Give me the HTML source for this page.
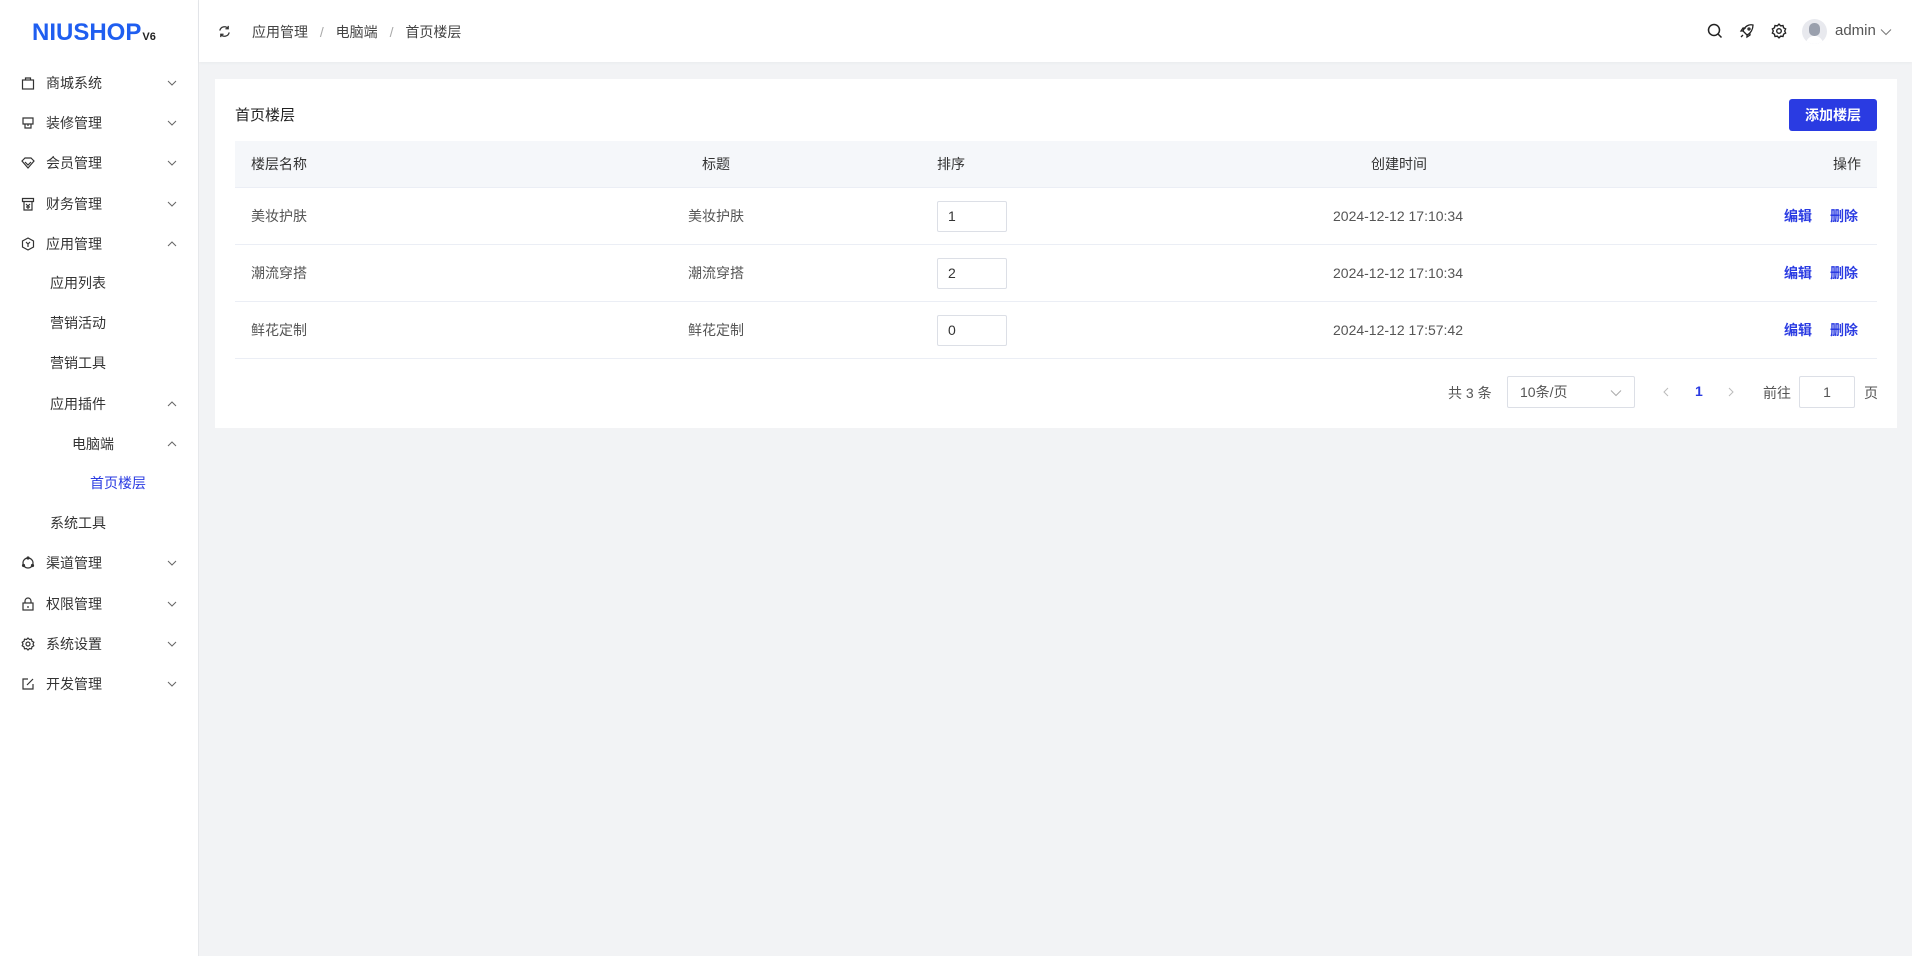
<!DOCTYPE html><html><head><meta charset="utf-8"><style>
*{box-sizing:border-box;margin:0;padding:0}
body{width:1912px;height:956px;background:#f2f3f5;font-family:"Liberation Sans","Noto Sans CJK SC",sans-serif;font-size:14px;color:#333;position:relative;overflow:hidden}
.side{position:absolute;left:0;top:0;width:199px;height:956px;background:#fff;border-right:1px solid #e6e8eb}
.logo{position:absolute;left:32px;top:19px;font-weight:bold;font-size:24px;color:#1f5ef0;font-family:"Liberation Sans",sans-serif;white-space:nowrap}
.logo small{font-size:11px;color:#222;margin-left:1px}
.mi{position:absolute;left:0;width:199px;height:40px;line-height:40px;font-size:14px;color:#333}
.mi svg.ic{position:absolute;left:21px;top:13px}
.mi .t{position:absolute}
.mi .ch{position:absolute;left:167px;top:16px}
.hdr{position:absolute;left:199px;top:0;right:0;height:62px;background:#fff;box-shadow:0 1px 3px rgba(0,0,0,.04)}
.card{position:absolute;left:215px;top:79px;width:1682px;height:349px;background:#fff}
.abs{position:absolute}
.btn{position:absolute;left:1789px;top:99px;width:88px;height:32px;background:#2a3be2;color:#fff;border-radius:3px;font-weight:bold;font-size:14px;text-align:center;line-height:32px}
.th{position:absolute;left:235px;top:141px;width:1642px;height:47px;background:#f5f7fa;border-bottom:1px solid #ebeef5}
.row{position:absolute;left:235px;width:1642px;height:57px;border-bottom:1px solid #ebeef5}
.c{position:absolute;top:0;line-height:57px;font-size:14px;color:#555;white-space:nowrap}
.inp{position:absolute;left:702px;top:13px;width:70px;height:31px;border:1px solid #dcdfe6;border-radius:2px;line-height:29px;padding-left:10px;color:#333}
.lk{color:#2a3be2;font-weight:bold}
</style></head><body>
<div class="side">
<div class="logo">NIUSHOP<small>V6</small></div>
<div class="mi" style="top:63px"><svg class="ic" width="14" height="14" viewBox="0 0 14 14" fill="none" stroke="#333" stroke-width="1.2"><rect x="1.5" y="4" width="11" height="9"/><path d="M4.5 4V2h5v2"/></svg><span class="t" style="left:46px">商城系统</span><svg class="ch" width="10" height="8" viewBox="0 0 10 8"><path d="M1 2l4 4 4-4" stroke="#666" fill="none"/></svg></div>
<div class="mi" style="top:103px"><svg class="ic" width="14" height="14" viewBox="0 0 14 14" fill="none" stroke="#333" stroke-width="1.2"><path d="M2 2h10v6H2zM4 8v4h6V8M7 8v2"/></svg><span class="t" style="left:46px">装修管理</span><svg class="ch" width="10" height="8" viewBox="0 0 10 8"><path d="M1 2l4 4 4-4" stroke="#666" fill="none"/></svg></div>
<div class="mi" style="top:143px"><svg class="ic" width="14" height="14" viewBox="0 0 14 14" fill="none" stroke="#333" stroke-width="1.2"><path d="M1 5l3-3h6l3 3-6 7z M4 6l3 3 3-3"/></svg><span class="t" style="left:46px">会员管理</span><svg class="ch" width="10" height="8" viewBox="0 0 10 8"><path d="M1 2l4 4 4-4" stroke="#666" fill="none"/></svg></div>
<div class="mi" style="top:184px"><svg class="ic" width="14" height="14" viewBox="0 0 14 14" fill="none" stroke="#333" stroke-width="1.2"><path d="M1.5 1.5h11v3h-11zM3 4.5V13h8V4.5M5 7l2 2 2-2M7 9v3M5 10h4"/></svg><span class="t" style="left:46px">财务管理</span><svg class="ch" width="10" height="8" viewBox="0 0 10 8"><path d="M1 2l4 4 4-4" stroke="#666" fill="none"/></svg></div>
<div class="mi" style="top:224px"><svg class="ic" width="14" height="14" viewBox="0 0 14 14" fill="none" stroke="#333" stroke-width="1.2"><path d="M7 1l5.5 3v6L7 13 1.5 10V4zM5 5l2 2 2-2M7 7v3"/></svg><span class="t" style="left:46px">应用管理</span><svg class="ch" width="10" height="8" viewBox="0 0 10 8"><path d="M1 6l4-4 4 4" stroke="#666" fill="none"/></svg></div>
<div class="mi" style="top:263px"><span class="t" style="left:50px">应用列表</span></div>
<div class="mi" style="top:303px"><span class="t" style="left:50px">营销活动</span></div>
<div class="mi" style="top:343px"><span class="t" style="left:50px">营销工具</span></div>
<div class="mi" style="top:384px"><span class="t" style="left:50px">应用插件</span><svg class="ch" width="10" height="8" viewBox="0 0 10 8"><path d="M1 6l4-4 4 4" stroke="#666" fill="none"/></svg></div>
<div class="mi" style="top:424px"><span class="t" style="left:72px">电脑端</span><svg class="ch" width="10" height="8" viewBox="0 0 10 8"><path d="M1 6l4-4 4 4" stroke="#666" fill="none"/></svg></div>
<div class="mi" style="top:463px"><span class="t" style="left:90px;color:#2a3be2">首页楼层</span></div>
<div class="mi" style="top:503px"><span class="t" style="left:50px">系统工具</span></div>
<div class="mi" style="top:543px"><svg class="ic" width="14" height="14" viewBox="0 0 14 14" fill="none" stroke="#333" stroke-width="1.2"><circle cx="7" cy="7" r="5"/><circle cx="7" cy="2" r="1" fill="#333"/><circle cx="2.5" cy="9.5" r="1" fill="#333"/><circle cx="11.5" cy="9.5" r="1" fill="#333"/></svg><span class="t" style="left:46px">渠道管理</span><svg class="ch" width="10" height="8" viewBox="0 0 10 8"><path d="M1 2l4 4 4-4" stroke="#666" fill="none"/></svg></div>
<div class="mi" style="top:584px"><svg class="ic" width="14" height="14" viewBox="0 0 14 14" fill="none" stroke="#333" stroke-width="1.2"><rect x="2" y="6" width="10" height="7"/><path d="M4 6V4a3 3 0 016 0v2M7 9v2"/></svg><span class="t" style="left:46px">权限管理</span><svg class="ch" width="10" height="8" viewBox="0 0 10 8"><path d="M1 2l4 4 4-4" stroke="#666" fill="none"/></svg></div>
<div class="mi" style="top:624px"><svg class="ic" width="14" height="14" viewBox="0 0 14 14" fill="none" stroke="#333" stroke-width="1.2"><circle cx="7" cy="7" r="2"/><path d="M7 1l1.5 1.5 2-.3.5 2 1.8 1L12 7l.8 1.8-1.8 1-.5 2-2-.3L7 13l-1.5-1.5-2 .3-.5-2-1.8-1L2 7l-.8-1.8 1.8-1 .5-2 2 .3z"/></svg><span class="t" style="left:46px">系统设置</span><svg class="ch" width="10" height="8" viewBox="0 0 10 8"><path d="M1 2l4 4 4-4" stroke="#666" fill="none"/></svg></div>
<div class="mi" style="top:664px"><svg class="ic" width="14" height="14" viewBox="0 0 14 14" fill="none" stroke="#333" stroke-width="1.2"><path d="M7 2H2v10h10V7M6 8l6-6"/></svg><span class="t" style="left:46px">开发管理</span><svg class="ch" width="10" height="8" viewBox="0 0 10 8"><path d="M1 2l4 4 4-4" stroke="#666" fill="none"/></svg></div>
</div>
<div class="hdr">
<svg class="abs" style="left:19px;top:25px" width="13" height="13" viewBox="0 0 14 14" fill="none" stroke="#333" stroke-width="1.4"><path d="M2 6a5 5 0 019-2M12 8a5 5 0 01-9 2M11 1v3H8M3 13v-3h3"/></svg>
<div class="abs" style="left:53px;top:22px;font-size:14px;color:#444">应用管理 <span style="color:#aaa;margin:0 8px">/</span> 电脑端 <span style="color:#aaa;margin:0 8px">/</span> 首页楼层</div>
<svg class="abs" style="left:1508px;top:23px" width="16" height="16" viewBox="0 0 16 16" fill="none" stroke="#222" stroke-width="1.5"><circle cx="7" cy="7" r="5.5"/><path d="M11 11l3.5 3.5"/></svg>
<svg class="abs" style="left:1540px;top:23px" width="16" height="16" viewBox="0 0 16 16" fill="none" stroke="#222" stroke-width="1.3"><path d="M6 10l-2-2c2-5 6-7 10-6 0 4-2 8-6 10zM4 8H2l2-3h3M8 12v2l3-2V9M4 12l-2 2"/><circle cx="10" cy="6" r="1"/></svg>
<svg class="abs" style="left:1572px;top:23px" width="16" height="16" viewBox="0 0 14 14" fill="none" stroke="#222" stroke-width="1.2"><circle cx="7" cy="7" r="2"/><path d="M7 1l1.5 1.5 2-.3.5 2 1.8 1L12 7l.8 1.8-1.8 1-.5 2-2-.3L7 13l-1.5-1.5-2 .3-.5-2-1.8-1L2 7l-.8-1.8 1.8-1 .5-2 2 .3z"/></svg>
<div class="abs" style="left:1603px;top:19px;width:25px;height:25px;border-radius:50%;background:#e8e9ee;overflow:hidden"><div style="position:absolute;left:7px;top:4px;width:11px;height:13px;border-radius:5px;background:#9aa0ad"></div><div style="position:absolute;left:4px;top:17px;width:17px;height:10px;border-radius:8px 8px 0 0;background:#fff"></div></div>
<div class="abs" style="left:1636px;top:22px;font-size:15px;color:#555">admin</div>
<svg class="abs" style="left:1681px;top:28px" width="12" height="8" viewBox="0 0 12 8"><path d="M1 1.5l5 5 5-5" stroke="#777" fill="none"/></svg>
</div>
<div class="card"></div>
<div class="abs" style="left:235px;top:104px;font-size:15px;color:#222">首页楼层</div>
<div class="btn">添加楼层</div>
<div class="th">
<div class="c" style="left:16px;line-height:47px;color:#333">楼层名称</div>
<div class="c" style="left:467px;line-height:47px;color:#333">标题</div>
<div class="c" style="left:702px;line-height:47px;color:#333">排序</div>
<div class="c" style="left:1136px;line-height:47px;color:#333">创建时间</div>
<div class="c" style="right:16px;line-height:47px;color:#333">操作</div>
</div>
<div class="row" style="top:188px"><div class="c" style="left:16px">美妆护肤</div><div class="c" style="left:453px">美妆护肤</div><div class="inp">1</div><div class="c" style="left:1098px">2024-12-12 17:10:34</div><div class="c lk" style="left:1549px">编辑</div><div class="c lk" style="left:1595px">删除</div></div>
<div class="row" style="top:245px"><div class="c" style="left:16px">潮流穿搭</div><div class="c" style="left:453px">潮流穿搭</div><div class="inp">2</div><div class="c" style="left:1098px">2024-12-12 17:10:34</div><div class="c lk" style="left:1549px">编辑</div><div class="c lk" style="left:1595px">删除</div></div>
<div class="row" style="top:302px"><div class="c" style="left:16px">鲜花定制</div><div class="c" style="left:453px">鲜花定制</div><div class="inp">0</div><div class="c" style="left:1098px">2024-12-12 17:57:42</div><div class="c lk" style="left:1549px">编辑</div><div class="c lk" style="left:1595px">删除</div></div>
<div class="abs" style="left:1448px;top:383px;color:#555">共 3 条</div>
<div class="abs" style="left:1507px;top:376px;width:128px;height:32px;border:1px solid #dcdfe6;border-radius:2px;padding-left:12px;line-height:30px;color:#555">10条/页<svg style="position:absolute;right:12px;top:12px" width="12" height="8" viewBox="0 0 12 8"><path d="M1 1.5l5 5 5-5" stroke="#aaa" fill="none"/></svg></div>
<svg class="abs" style="left:1662px;top:387px" width="8" height="10" viewBox="0 0 8 10"><path d="M6 1L2 5l4 4" stroke="#bbb" fill="none"/></svg>
<div class="abs" style="left:1695px;top:383px;color:#2a3be2;font-weight:bold">1</div>
<svg class="abs" style="left:1727px;top:387px" width="8" height="10" viewBox="0 0 8 10"><path d="M2 1l4 4-4 4" stroke="#bbb" fill="none"/></svg>
<div class="abs" style="left:1763px;top:383px;color:#555">前往</div>
<div class="abs" style="left:1799px;top:376px;width:56px;height:32px;border:1px solid #dcdfe6;border-radius:2px;text-align:center;line-height:30px;color:#555">1</div>
<div class="abs" style="left:1864px;top:383px;color:#555">页</div>
</body></html>
